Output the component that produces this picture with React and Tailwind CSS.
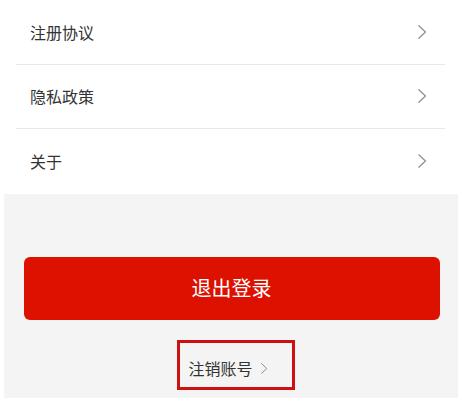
import React from "react";

const Chevron = ({ className }) => (
  <svg className={className} viewBox="0 0 10 16" fill="none" stroke="currentColor" strokeWidth="1.2">
    <path d="M1.5 1.5 L8.5 8 L1.5 14.5" />
  </svg>
);

const rows = ["注册协议", "隐私政策", "关于"];

export default function App() {
  return (
    <div
      className="w-[461px] h-[402px] bg-white flex flex-col overflow-hidden"
      style={{ fontFamily: '"Noto Sans CJK SC", "Noto Sans", sans-serif' }}
    >
      <div className="flex flex-col px-4">
        {rows.map((r, i) => (
          <div
            key={r}
            className={`h-[64.5px] flex items-center justify-between pl-[14px] pr-[18px] ${i < rows.length - 1 ? "border-b border-[#e8e8e8]" : ""}`}
          >
            <span className="text-[16px] text-[#333333]">{r}</span>
            <Chevron className="w-[10px] h-[16px] text-[#8c8c8c]" />
          </div>
        ))}
      </div>
      <div className="flex-1 ml-[4px] mr-[3px] mb-[4px] bg-[#f4f4f4] flex flex-col items-center pt-[63px]">
        <button className="w-[416px] h-[63px] rounded-[6px] bg-[#dd1100] text-white text-[20px] flex items-center justify-center ml-[1px]">
          退出登录
        </button>
        <div className="mt-[20px] w-[118px] h-[50px] border-[3px] border-[#cc1111] flex items-center justify-start gap-[7px] pl-[9px] pt-[7px] ml-[9px]">
          <span className="text-[16px] text-[#333333]">注销账号</span>
          <Chevron className="w-[8px] h-[15px] text-[#8c8c8c]" />
        </div>
      </div>
    </div>
  );
}
